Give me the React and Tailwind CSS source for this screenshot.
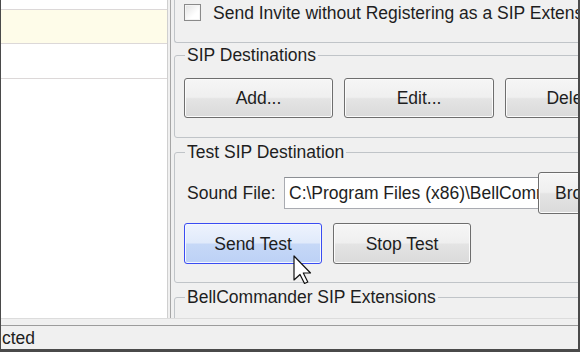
const btn =
  'h-[40px] shrink-0 flex items-center justify-center rounded-[3px] border border-[#6e6e6e] bg-[linear-gradient(to_bottom,#f6f6f6_0%,#efefef_48%,#e4e4e4_52%,#dadada_100%)] shadow-[inset_0_0_0_1px_#fbfbfb] whitespace-nowrap'

function Group({ title, className = '', children }) {
  return (
    <fieldset className={`w-[450px] shrink-0 border border-[#c0c4c8] rounded-[3px] ${className}`}>
      <legend className="ml-[10px] px-[2px] leading-[20px]">{title}</legend>
      {children}
    </fieldset>
  )
}

export default function App() {
  return (
    <div className="relative w-[580px] h-[352px] overflow-hidden flex flex-col bg-[#f0f0f0] border-l border-r-2 border-b-[3px] border-[#4a4a4a] font-['Liberation_Sans',Arial,sans-serif] text-[17.5px] leading-[20px] text-[#1e1e1e]">
      <div className="flex h-[318px] shrink-0">
        {/* list on the left */}
        <div className="w-[167px] shrink-0 bg-white border-r border-[#cfcfcf]">
          <div className="h-[10px] border-b border-[#dcd8d8]" />
          <div className="h-[34px] bg-[#fefce9] border-b border-[#dcd8d8]" />
          <div className="h-[35px] border-b border-[#dcd8d8]" />
        </div>

        <div className="w-[2px] shrink-0" />

        {/* settings panel */}
        <div className="flex-1 min-w-0 overflow-hidden flex flex-col border-l border-[#a6a6a6] pl-[3px]">
          <div className="w-[450px] shrink-0 h-[43px] border-l border-b border-[#c0c4c8] rounded-bl-[3px] flex items-center pb-[19px] pt-[2px] pl-[9px] gap-[12px] whitespace-nowrap">
            <div className="w-[17px] h-[17px] shrink-0 border border-[#8a8a8a] bg-[linear-gradient(135deg,#e2e2e2,#ffffff_65%)] shadow-[inset_0_0_0_1px_#f4f4f4]" />
            <span>Send Invite without Registering as a SIP Extension</span>
          </div>

          <Group title="SIP Destinations" className="mt-[2px]">
            <div className="flex gap-[11px] pl-[9px] pt-[13px] pb-[19px]">
              <div className={`${btn} w-[149px]`}>Add...</div>
              <div className={`${btn} w-[150px]`}>Edit...</div>
              <div className={`${btn} w-[148px]`}>Delete...</div>
            </div>
          </Group>

          <Group title="Test SIP Destination" className="mt-[4px]">
            <div className="pl-[12px] pt-[10px] flex items-center whitespace-nowrap">
              <span className="w-[97px] shrink-0">Sound File:</span>
              <div className="w-[258px] h-[32px] shrink-0 bg-white border border-[#a9abb1] border-t-[#8c8f94] flex items-center pl-[4px] overflow-hidden">
                {'C:\\Program Files (x86)\\BellCommander\\Sounds\\bell.wav'}
              </div>
              <div className={`${btn} relative -ml-[4px] w-[107px] h-[42px]`}>Browse...</div>
            </div>
            <div className="flex gap-[11px] pl-[9px] pt-[9px] pb-[18px]">
              <div className="h-[41px] w-[138px] shrink-0 flex items-center justify-center rounded-[3px] border border-[#3a4cf2] bg-[linear-gradient(to_bottom,#eef3fd_0%,#e0eafb_48%,#c6d8f7_52%,#bcd1f6_100%)] shadow-[inset_0_0_0_1px_#f4f8ff]">
                Send Test
              </div>
              <div className={`${btn} w-[138px] h-[41px]`}>Stop Test</div>
            </div>
          </Group>

          <Group title="BellCommander SIP Extensions" className="mt-[4px]">
            <div className="h-[40px]" />
          </Group>
        </div>
      </div>

      <div className="h-[8px] shrink-0 border-t border-[#dcdcdc] border-b border-b-[#9c9c9c]" />
      <div className="h-[23px] shrink-0 flex items-center pl-[1px] whitespace-nowrap">cted</div>

      <svg className="absolute left-[292px] top-[255px]" width="20" height="31" viewBox="0 0 20 31">
        <polygon
          points="1,1 1,25 7,19.5 11.5,28.5 14.8,27 10.3,18 17.5,18"
          fill="#ffffff"
          stroke="#111111"
          strokeWidth="1.2"
          strokeLinejoin="round"
        />
      </svg>
    </div>
  )
}
